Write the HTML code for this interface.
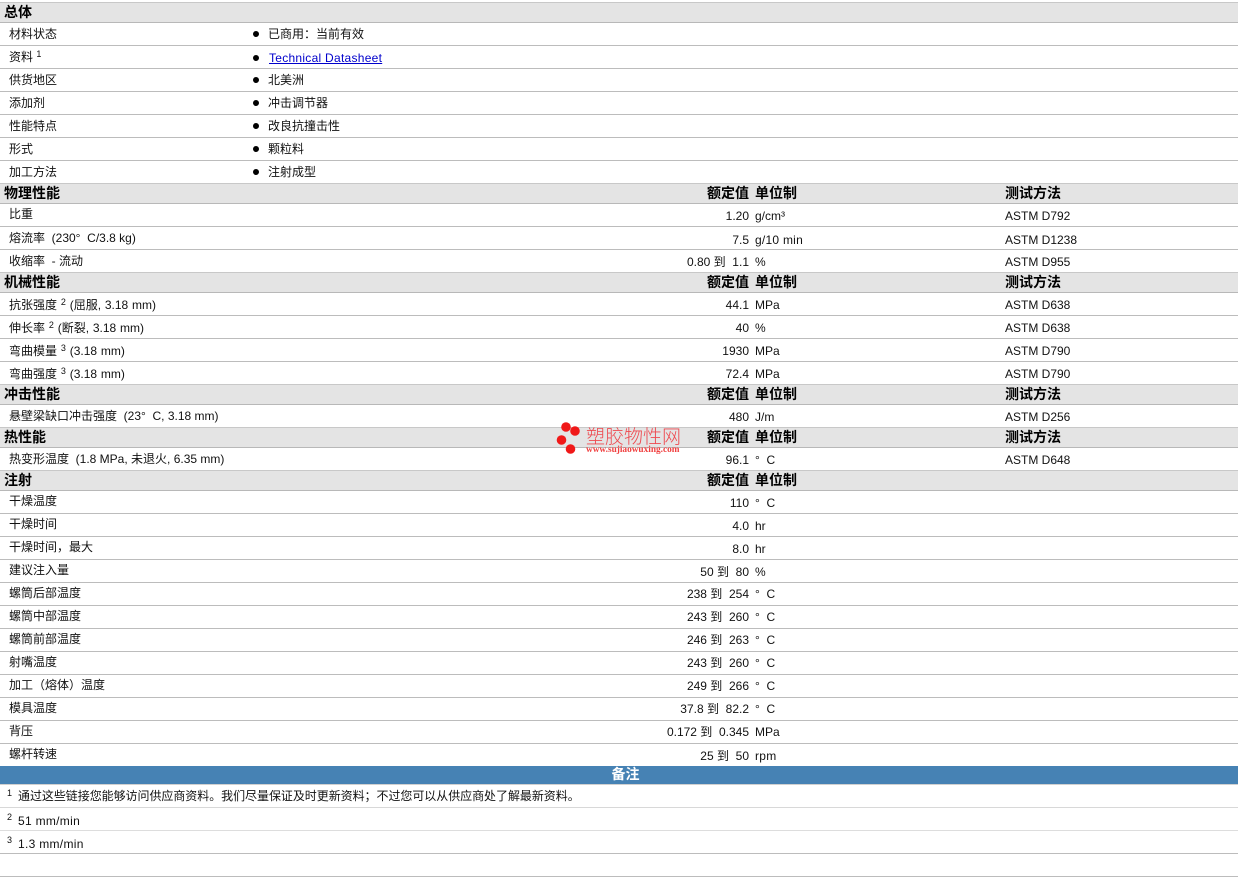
<!DOCTYPE html>
<html lang="zh-CN">
<head>
<meta charset="utf-8">
<title>材料数据</title>
<style>
html,body{margin:0;padding:0;background:#fff;}
body{position:relative;width:1238px;height:878px;overflow:hidden;font-family:"Liberation Sans","WenQuanYi Zen Hei","Noto Sans CJK SC",sans-serif;font-size:12px;color:#111;}
.h,.l,.b{position:absolute;left:0;width:1238px;}
.h{background:#e4e4e4;height:19px;border-top:1px solid #c8c8c8;border-bottom:1px solid #b8b8b8;box-sizing:content-box;}
.l{height:1px;background:#bcbcbc;}
.t{position:absolute;white-space:nowrap;line-height:16px;height:16px;}
.bd{font-weight:bold;font-size:14px;color:#000;}
.r{text-align:right;right:489px;}
sup{font-size:9px;line-height:0;vertical-align:4px;}
a{color:#00c;text-decoration:underline;letter-spacing:.27px;}
.dot{position:absolute;left:253px;width:6px;height:6px;border-radius:50%;background:#000;}
</style>
</head>
<body>
<div class="h" style="top:2px"></div>
<div class="l" style="top:45px"></div><div class="l" style="top:68px"></div><div class="l" style="top:91px"></div><div class="l" style="top:114px"></div><div class="l" style="top:137px"></div><div class="l" style="top:160px"></div>
<div class="h" style="top:183px"></div>
<div class="l" style="top:226px"></div><div class="l" style="top:249px"></div>
<div class="h" style="top:272px"></div>
<div class="l" style="top:315px"></div><div class="l" style="top:338px"></div><div class="l" style="top:361px"></div>
<div class="h" style="top:384px"></div>
<div class="h" style="top:427px"></div>
<div class="h" style="top:470px"></div>
<div class="l" style="top:513px"></div><div class="l" style="top:536px"></div><div class="l" style="top:559px"></div><div class="l" style="top:582px"></div><div class="l" style="top:605px"></div><div class="l" style="top:628px"></div><div class="l" style="top:651px"></div><div class="l" style="top:674px"></div><div class="l" style="top:697px"></div><div class="l" style="top:720px"></div><div class="l" style="top:743px"></div>
<div class="b" style="top:766px;height:18px;background:#4682b4"></div>
<div class="l" style="top:784px;background:#d0d0d0"></div>
<div class="l" style="top:807px;background:#d8d8d8"></div><div class="l" style="top:830px;background:#ddd"></div><div class="l" style="top:853px"></div><div class="l" style="top:876px"></div>

<span class="t bd" style="left:4px;top:4px">总体</span>
<span class="t" style="left:9px;top:26px">材料状态</span><i class="dot" style="top:31px"></i><span class="t" style="left:268px;top:26px">已商用：当前有效</span>
<span class="t" style="left:9px;top:49px">资料 <sup>1</sup></span><i class="dot" style="top:55px"></i><span class="t" style="left:269px;top:50px"><a href="#">Technical Datasheet</a></span>
<span class="t" style="left:9px;top:72px">供货地区</span><i class="dot" style="top:77px"></i><span class="t" style="left:268px;top:72px">北美洲</span>
<span class="t" style="left:9px;top:95px">添加剂</span><i class="dot" style="top:100px"></i><span class="t" style="left:268px;top:95px">冲击调节器</span>
<span class="t" style="left:9px;top:118px">性能特点</span><i class="dot" style="top:123px"></i><span class="t" style="left:268px;top:118px">改良抗撞击性</span>
<span class="t" style="left:9px;top:141px">形式</span><i class="dot" style="top:146px"></i><span class="t" style="left:268px;top:141px">颗粒料</span>
<span class="t" style="left:9px;top:164px">加工方法</span><i class="dot" style="top:169px"></i><span class="t" style="left:268px;top:164px">注射成型</span>

<span class="t bd" style="left:4px;top:185px">物理性能</span><span class="t bd r" style="top:185px">额定值</span><span class="t bd" style="left:755px;top:185px">单位制</span><span class="t bd" style="left:1005px;top:185px">测试方法</span>
<span class="t" style="left:9px;top:206px">比重</span><span class="t r" style="top:208px">1.20</span><span class="t" style="left:755px;top:208px">g/cm³</span><span class="t" style="left:1005px;top:208px">ASTM D792</span>
<span class="t" style="left:9px;top:230px">熔流率&nbsp; (230°&nbsp; C/3.8 kg)</span><span class="t r" style="top:232px">7.5</span><span class="t" style="left:755px;top:232px;letter-spacing:.25px">g/10 min</span><span class="t" style="left:1005px;top:232px">ASTM D1238</span>
<span class="t" style="left:9px;top:253px">收缩率&nbsp; - 流动</span><span class="t r" style="top:254px">0.80 到&nbsp; 1.1</span><span class="t" style="left:755px;top:254px">%</span><span class="t" style="left:1005px;top:254px">ASTM D955</span>

<span class="t bd" style="left:4px;top:274px">机械性能</span><span class="t bd r" style="top:274px">额定值</span><span class="t bd" style="left:755px;top:274px">单位制</span><span class="t bd" style="left:1005px;top:274px">测试方法</span>
<span class="t" style="left:9px;top:297px;word-spacing:.5px">抗张强度 <sup>2</sup> (屈服, 3.18 mm)</span><span class="t r" style="top:297px">44.1</span><span class="t" style="left:755px;top:297px">MPa</span><span class="t" style="left:1005px;top:297px">ASTM D638</span>
<span class="t" style="left:9px;top:320px;word-spacing:.5px">伸长率 <sup>2</sup> (断裂, 3.18 mm)</span><span class="t r" style="top:320px">40</span><span class="t" style="left:755px;top:320px">%</span><span class="t" style="left:1005px;top:320px">ASTM D638</span>
<span class="t" style="left:9px;top:343px;word-spacing:.5px">弯曲模量 <sup>3</sup> (3.18 mm)</span><span class="t r" style="top:343px">1930</span><span class="t" style="left:755px;top:343px">MPa</span><span class="t" style="left:1005px;top:343px">ASTM D790</span>
<span class="t" style="left:9px;top:366px;word-spacing:.5px">弯曲强度 <sup>3</sup> (3.18 mm)</span><span class="t r" style="top:366px">72.4</span><span class="t" style="left:755px;top:366px">MPa</span><span class="t" style="left:1005px;top:366px">ASTM D790</span>

<span class="t bd" style="left:4px;top:386px">冲击性能</span><span class="t bd r" style="top:386px">额定值</span><span class="t bd" style="left:755px;top:386px">单位制</span><span class="t bd" style="left:1005px;top:386px">测试方法</span>
<span class="t" style="left:9px;top:408px">悬壁梁缺口冲击强度&nbsp; (23°&nbsp; C, 3.18 mm)</span><span class="t r" style="top:409px">480</span><span class="t" style="left:755px;top:409px">J/m</span><span class="t" style="left:1005px;top:409px">ASTM D256</span>

<span class="t bd" style="left:4px;top:429px">热性能</span><span class="t bd r" style="top:429px">额定值</span><span class="t bd" style="left:755px;top:429px">单位制</span><span class="t bd" style="left:1005px;top:429px">测试方法</span>
<span class="t" style="left:9px;top:451px">热变形温度&nbsp; (1.8 MPa, 未退火, 6.35 mm)</span><span class="t r" style="top:452px">96.1</span><span class="t" style="left:755px;top:452px">°&nbsp; C</span><span class="t" style="left:1005px;top:452px">ASTM D648</span>

<span class="t bd" style="left:4px;top:472px">注射</span><span class="t bd r" style="top:472px">额定值</span><span class="t bd" style="left:755px;top:472px">单位制</span>
<span class="t" style="left:9px;top:493px">干燥温度</span><span class="t r" style="top:495px">110</span><span class="t" style="left:755px;top:495px">°&nbsp; C</span>
<span class="t" style="left:9px;top:516px">干燥时间</span><span class="t r" style="top:518px">4.0</span><span class="t" style="left:755px;top:518px">hr</span>
<span class="t" style="left:9px;top:539px">干燥时间，最大</span><span class="t r" style="top:541px">8.0</span><span class="t" style="left:755px;top:541px">hr</span>
<span class="t" style="left:9px;top:562px">建议注入量</span><span class="t r" style="top:564px">50 到&nbsp; 80</span><span class="t" style="left:755px;top:564px">%</span>
<span class="t" style="left:9px;top:585px">螺筒后部温度</span><span class="t r" style="top:586px">238 到&nbsp; 254</span><span class="t" style="left:755px;top:586px">°&nbsp; C</span>
<span class="t" style="left:9px;top:608px">螺筒中部温度</span><span class="t r" style="top:609px">243 到&nbsp; 260</span><span class="t" style="left:755px;top:609px">°&nbsp; C</span>
<span class="t" style="left:9px;top:631px">螺筒前部温度</span><span class="t r" style="top:632px">246 到&nbsp; 263</span><span class="t" style="left:755px;top:632px">°&nbsp; C</span>
<span class="t" style="left:9px;top:654px">射嘴温度</span><span class="t r" style="top:655px">243 到&nbsp; 260</span><span class="t" style="left:755px;top:655px">°&nbsp; C</span>
<span class="t" style="left:9px;top:677px">加工（熔体）温度</span><span class="t r" style="top:678px">249 到&nbsp; 266</span><span class="t" style="left:755px;top:678px">°&nbsp; C</span>
<span class="t" style="left:9px;top:700px">模具温度</span><span class="t r" style="top:701px">37.8 到&nbsp; 82.2</span><span class="t" style="left:755px;top:701px">°&nbsp; C</span>
<span class="t" style="left:9px;top:723px">背压</span><span class="t r" style="top:724px">0.172 到&nbsp; 0.345</span><span class="t" style="left:755px;top:724px">MPa</span>
<span class="t" style="left:9px;top:746px">螺杆转速</span><span class="t r" style="top:748px">25 到&nbsp; 50</span><span class="t" style="left:755px;top:748px;letter-spacing:.3px">rpm</span>

<span class="t bd" style="left:0;width:1251px;text-align:center;top:766px;color:#fff">备注</span>
<span class="t" style="left:7px;top:788px"><sup>1</sup></span><span class="t" style="left:18px;top:788px;letter-spacing:-.05px">通过这些链接您能够访问供应商资料。我们尽量保证及时更新资料；不过您可以从供应商处了解最新资料。</span>
<span class="t" style="left:7px;top:812px"><sup>2</sup></span><span class="t" style="left:18px;top:813px;letter-spacing:.3px">51 mm/min</span>
<span class="t" style="left:7px;top:835px"><sup>3</sup></span><span class="t" style="left:18px;top:836px;letter-spacing:.3px">1.3 mm/min</span>

<svg style="position:absolute;left:555px;top:420px" width="28" height="36" viewBox="0 0 28 36">
<circle cx="11" cy="7" r="4.8" fill="#f01818"/><circle cx="20" cy="11" r="4.8" fill="#f01818"/><circle cx="6.5" cy="20" r="4.8" fill="#f01818"/><circle cx="15.5" cy="29" r="4.8" fill="#f01818"/>
</svg>
<span class="t" style="left:586px;top:428px;font-size:19px;line-height:20px;height:20px;color:#ee4a50;font-family:'Liberation Sans','Noto Sans CJK SC',sans-serif;font-weight:300">塑胶物性网</span>
<span class="t" style="left:586px;top:443px;font-size:9.3px;line-height:14px;height:14px;color:#f04040;font-family:'Liberation Serif',serif;font-weight:bold">www.sujiaowuxing.com</span>
</body>
</html>
